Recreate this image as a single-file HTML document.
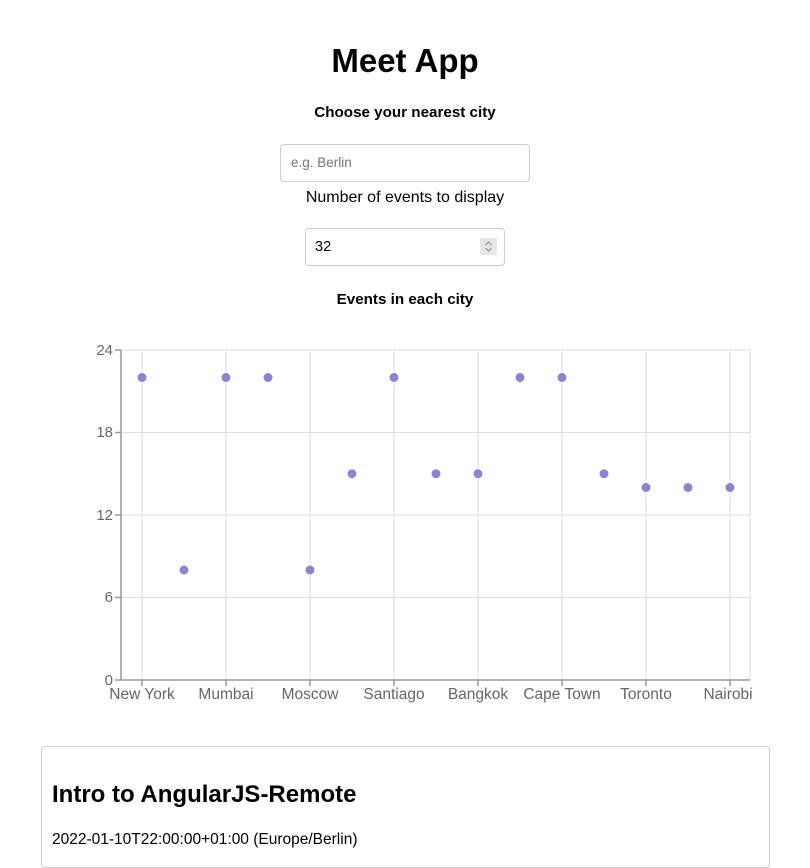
<!DOCTYPE html>
<html><head><meta charset="utf-8"><style>
body{margin:0;width:810px;height:849px;overflow:hidden;background:#fff;font-family:"Liberation Sans",sans-serif;color:#000;position:relative}
.a{position:absolute;white-space:nowrap}
.c{left:0;width:810px;text-align:center}
</style></head><body>
<div class="a c" style="top:42px;font-size:33px;font-weight:bold">Meet App</div>
<div class="a c" style="top:104px;font-size:15.2px;font-weight:bold">Choose your nearest city</div>
<div class="a" style="left:280px;top:144px;width:248px;height:36px;border:1px solid #ccc;border-radius:4px"></div>
<div class="a" style="left:291px;top:155px;font-size:13.5px;color:#777">e.g. Berlin</div>
<div class="a c" style="top:189px;font-size:16px">Number of events to display</div>
<div class="a" style="left:305px;top:228px;width:198px;height:36px;border:1px solid #ccc;border-radius:4px"></div>
<div class="a" style="left:315px;top:239px;font-size:14.5px">32</div>
<div class="a" style="left:480px;top:238px;width:17px;height:17px;background:#e6e6e9;border-radius:2px"><svg width="17" height="17"><path d="M5.5 7L8.5 4L11.5 7M5.5 10L8.5 13L11.5 10" stroke="#888" fill="none" stroke-width="1"/></svg></div>
<div class="a c" style="top:291px;font-size:15.2px;font-weight:bold">Events in each city</div>
<svg class="a" style="left:0;top:330px" width="810" height="380">
<g stroke="#ddd" stroke-width="1">
<line x1="121" y1="20" x2="750" y2="20"/><line x1="121" y1="102.5" x2="750" y2="102.5"/><line x1="121" y1="185" x2="750" y2="185"/><line x1="121" y1="267.5" x2="750" y2="267.5"/>
<line x1="142" y1="20" x2="142" y2="350"/><line x1="226" y1="20" x2="226" y2="350"/><line x1="310" y1="20" x2="310" y2="350"/><line x1="394" y1="20" x2="394" y2="350"/><line x1="478" y1="20" x2="478" y2="350"/><line x1="562" y1="20" x2="562" y2="350"/><line x1="646" y1="20" x2="646" y2="350"/><line x1="730" y1="20" x2="730" y2="350"/><line x1="750" y1="20" x2="750" y2="350"/>
</g>
<g stroke="#999" stroke-width="1.5"><line x1="121" y1="20" x2="121" y2="350"/><line x1="121" y1="350" x2="750" y2="350"/>
<line x1="115" y1="20" x2="121" y2="20"/><line x1="115" y1="102.5" x2="121" y2="102.5"/><line x1="115" y1="185" x2="121" y2="185"/><line x1="115" y1="267.5" x2="121" y2="267.5"/><line x1="115" y1="350" x2="121" y2="350"/>
<line x1="142" y1="350" x2="142" y2="356"/><line x1="226" y1="350" x2="226" y2="356"/><line x1="310" y1="350" x2="310" y2="356"/><line x1="394" y1="350" x2="394" y2="356"/><line x1="478" y1="350" x2="478" y2="356"/><line x1="562" y1="350" x2="562" y2="356"/><line x1="646" y1="350" x2="646" y2="356"/><line x1="730" y1="350" x2="730" y2="356"/></g>
<g font-family="Liberation Sans,sans-serif" font-size="15" fill="#666" text-anchor="end">
<text x="113" y="25">24</text><text x="113" y="107">18</text><text x="113" y="190">12</text><text x="113" y="272">6</text><text x="113" y="355">0</text></g>
<g font-family="Liberation Sans,sans-serif" font-size="15.5" fill="#666" text-anchor="middle">
<text x="142" y="369">New York</text><text x="226" y="369">Mumbai</text><text x="310" y="369">Moscow</text><text x="394" y="369">Santiago</text><text x="478" y="369">Bangkok</text><text x="562" y="369">Cape Town</text><text x="646" y="369">Toronto</text><text x="728" y="369">Nairobi</text></g>
<g fill="#8884d8">
<circle cx="142" cy="47.5" r="4.5"/><circle cx="184" cy="240" r="4.5"/><circle cx="226" cy="47.5" r="4.5"/><circle cx="268" cy="47.5" r="4.5"/><circle cx="310" cy="240" r="4.5"/><circle cx="352" cy="143.75" r="4.5"/><circle cx="394" cy="47.5" r="4.5"/><circle cx="436" cy="143.75" r="4.5"/><circle cx="478" cy="143.75" r="4.5"/><circle cx="520" cy="47.5" r="4.5"/><circle cx="562" cy="47.5" r="4.5"/><circle cx="604" cy="143.75" r="4.5"/><circle cx="646" cy="157.5" r="4.5"/><circle cx="688" cy="157.5" r="4.5"/><circle cx="730" cy="157.5" r="4.5"/></g>
</svg>
<div class="a" style="left:41px;top:746px;width:727px;height:120px;border:1px solid #ccc;border-radius:4px"></div>
<div class="a" style="left:52px;top:781px;font-size:24px;font-weight:bold">Intro to AngularJS-Remote</div>
<div class="a" style="left:52px;top:831px;font-size:15.5px">2022-01-10T22:00:00+01:00 (Europe/Berlin)</div>
</body></html>
